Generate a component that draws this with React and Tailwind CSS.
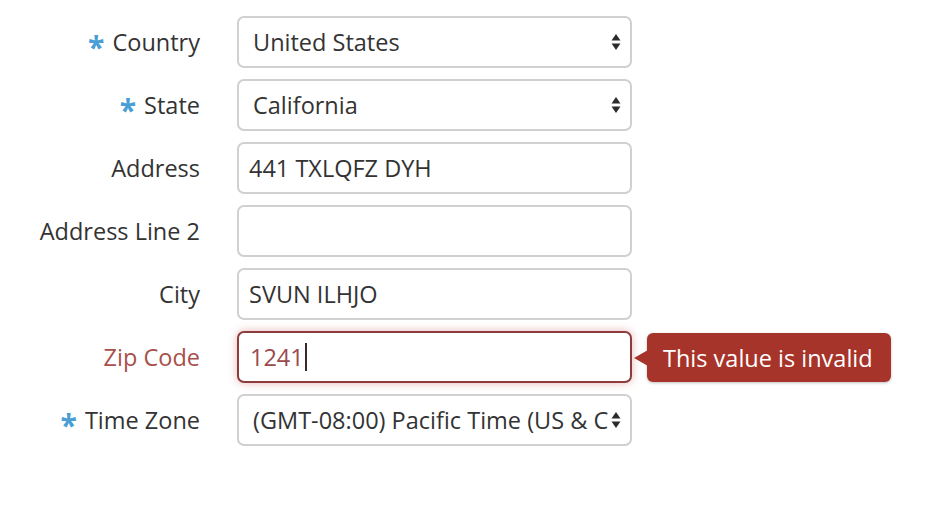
import React from "react";

const font = { fontFamily: '"Open Sans", "Noto Sans", sans-serif' };

function Arrows() {
  return (
    <svg width="10" height="18" viewBox="0 0 10 18" className="shrink-0">
      <path d="M5 1 L9.5 7.5 L0.5 7.5 Z" fill="#2b2b2b" />
      <path d="M0.5 10.5 L9.5 10.5 L5 17 Z" fill="#2b2b2b" />
    </svg>
  );
}

function Label({ children, required, error }) {
  return (
    <div className="w-[200px] shrink-0 flex items-center justify-end gap-[8px] pt-[2px]">
      {required && (
        <span className="text-[#4a9ed6] text-[30px] font-bold leading-none mt-[8px]">*</span>
      )}
      <span className={error ? "text-[#a9504b]" : "text-[#333333]"}>{children}</span>
    </div>
  );
}

function Select({ value }) {
  return (
    <div className="w-[395px] h-[52px] rounded-[7px] border-2 border-[#d0d0d0] bg-white flex items-center pl-[14px] pr-[9px] gap-[3px]">
      <span className="flex-1 overflow-hidden whitespace-nowrap text-[#333333] pt-[2px]">{value}</span>
      <Arrows />
    </div>
  );
}

function Input({ value }) {
  return (
    <div className="w-[395px] h-[52px] rounded-[7px] border-2 border-[#d0d0d0] bg-white flex items-center px-[10px]">
      <span className="whitespace-nowrap text-[#333333] pt-[2px]">{value}</span>
    </div>
  );
}

function Row({ children }) {
  return <div className="flex items-center gap-[37px] h-[52px]">{children}</div>;
}

export default function App() {
  return (
    <div className="w-[935px] h-[520px] bg-white text-[23.5px] pt-[16px]" style={font}>
      <div className="flex flex-col gap-[11px]">
        <Row>
          <Label required>Country</Label>
          <Select value="United States" />
        </Row>
        <Row>
          <Label required>State</Label>
          <Select value="California" />
        </Row>
        <Row>
          <Label>Address</Label>
          <Input value="441 TXLQFZ DYH" />
        </Row>
        <Row>
          <Label>Address Line 2</Label>
          <Input value="" />
        </Row>
        <Row>
          <Label>City</Label>
          <Input value="SVUN ILHJO" />
        </Row>
        <Row>
          <Label error>Zip Code</Label>
          <div className="relative">
            <div className="w-[395px] h-[52px] rounded-[7px] border-2 border-[#8c3c3c] bg-white flex items-center px-[11px] shadow-[0_0_8px_rgba(205,90,90,0.45)]">
              <span className="whitespace-nowrap text-[#9b4a4a] pt-[2px]">1241</span>
              <span className="w-[2px] h-[28px] bg-[#3a2a2a] ml-[1px]"></span>
            </div>
            <div className="absolute left-[410px] top-[2px] h-[49px] flex items-center">
              <div className="relative h-[49px] rounded-[6px] bg-[#a7342a] pl-[16px] pr-[18px] flex items-center text-white text-[23.5px] whitespace-nowrap shadow-[0_1px_3px_rgba(0,0,0,0.25)]">
                <span className="absolute left-[-13px] top-[17px] w-0 h-0 border-y-[8px] border-y-transparent border-r-[14px] border-r-[#a7342a]"></span>
                <span className="pt-[2px]">This value is invalid</span>
              </div>
            </div>
          </div>
        </Row>
        <Row>
          <Label required>Time Zone</Label>
          <Select value="(GMT-08:00) Pacific Time (US & Canada)" />
        </Row>
      </div>
    </div>
  );
}
